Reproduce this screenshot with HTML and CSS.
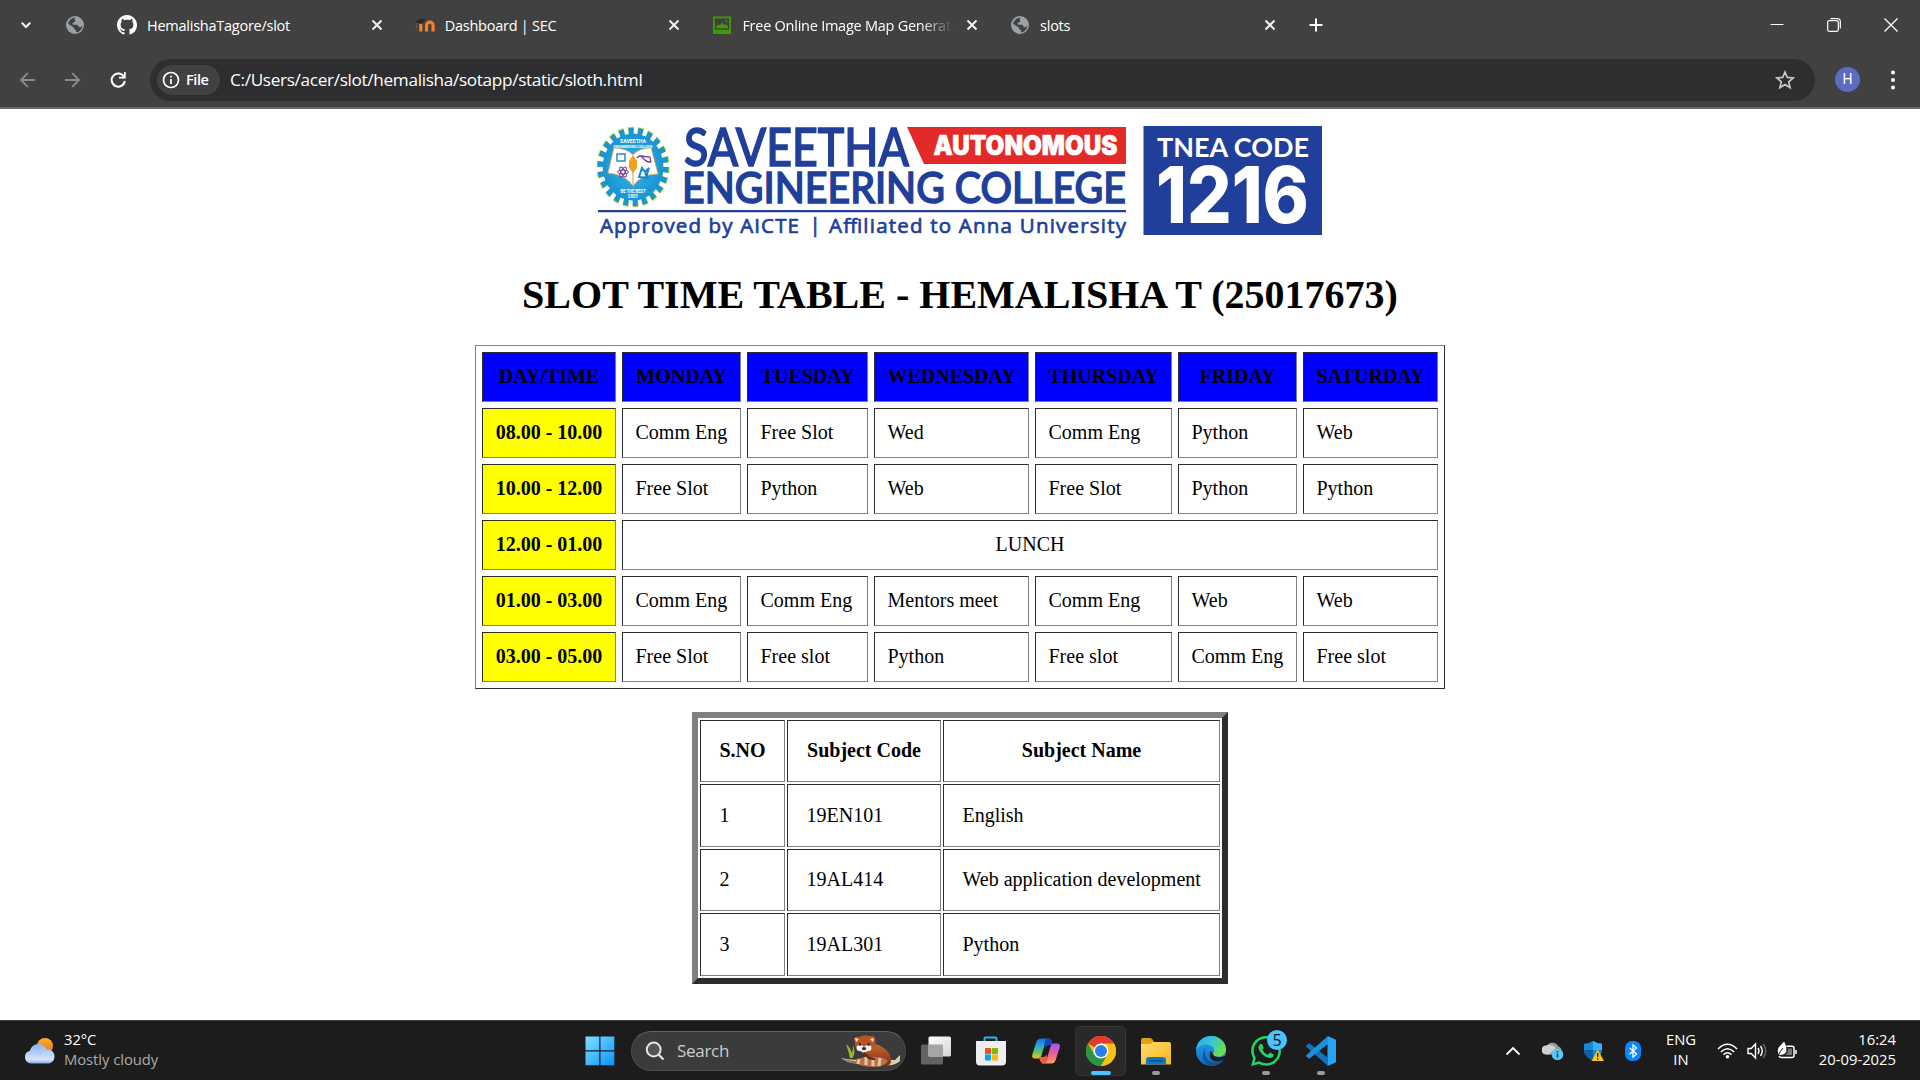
FILE: index.html
```html
<!DOCTYPE html>
<html lang="en">
<head>
<meta charset="utf-8">
<title>slots</title>
<link rel="stylesheet" href="styles.css">
</head>
<body>
<svg class="defs" width="0" height="0">
  <defs>
    <symbol id="x" viewBox="0 0 16 16"><path d="M3.500 3.500l9 9M12.500 3.500l-9 9" stroke="#f2f2f2" stroke-width="2" fill="none"/></symbol>
    <symbol id="globe" viewBox="0 0 20 20"><circle cx="10" cy="10" r="9" fill="#9aa0a6"/><path d="M10.500 2.600c-1 1.400-1.200 2-.4 3 .8.900-.3 1.700-1.600 1.900-1.400.2-1 1.800-.1 2.300h3.400c1.700.3 1.300 2.300 2.600 2.400 1.500.1 2.100-.8 3-1.800-.2 3.900-3.200 6.700-6.400 6.900v-2.500c-1.500-.2-2.200-.9-2.200-2.400L3.100 8.700c.8-3.500 3.700-6 7.400-6.100z" fill="#414141"/><path d="M11 3.600c2.500.2 4.600 2 5.200 4.300-1.500 1.400-3.400.6-3.500-.9-1.600-.2-2.300-1.900-1.700-3.400z" fill="#9aa0a6"/></symbol>
    <linearGradient id="gw" x1="0" y1="0" x2="1" y2="1"><stop offset="0" stop-color="#7fe0ff"/><stop offset="1" stop-color="#0a93ff"/></linearGradient>
    <linearGradient id="gcl" x1="0" y1="0" x2="0" y2="1"><stop offset="0" stop-color="#8fb4f2"/><stop offset=".8" stop-color="#d6e4fb"/><stop offset="1" stop-color="#7fa5e8"/></linearGradient>
    <linearGradient id="gsun" x1="0" y1="0" x2="0" y2="1"><stop offset="0" stop-color="#f7b42a"/><stop offset="1" stop-color="#ee6a14"/></linearGradient>
    <linearGradient id="gtv" x1="0" y1="0" x2="1" y2="1"><stop offset="0" stop-color="#fff"/><stop offset="1" stop-color="#d4d4d4"/></linearGradient>
    <linearGradient id="gc1" x1="0" y1="0" x2="0" y2="1"><stop offset="0" stop-color="#1a6be0"/><stop offset=".35" stop-color="#22a8e0"/><stop offset=".65" stop-color="#5cc06a"/><stop offset="1" stop-color="#f0c520"/></linearGradient>
    <linearGradient id="gc2" x1="0" y1="0" x2="0" y2="1"><stop offset="0" stop-color="#a259f0"/><stop offset=".5" stop-color="#ea5aa0"/><stop offset="1" stop-color="#ffa24a"/></linearGradient>
    <linearGradient id="gf" x1="0" y1="0" x2="1" y2="1"><stop offset="0" stop-color="#ffdb6b"/><stop offset="1" stop-color="#f5b81c"/></linearGradient>
    <linearGradient id="ge1" x1="0" y1="0" x2="1" y2=".6"><stop offset="0" stop-color="#2aa5e8"/><stop offset=".5" stop-color="#35c6d8"/><stop offset="1" stop-color="#6be04a"/></linearGradient>
    <linearGradient id="ge2" x1="0" y1="0" x2="0" y2="1"><stop offset="0" stop-color="#2aa4ea"/><stop offset="1" stop-color="#0d6cc4"/></linearGradient>
    <radialGradient id="gear"><stop offset="0" stop-color="#39b6e8"/><stop offset="1" stop-color="#1a94d2"/></radialGradient>
    <linearGradient id="gp" x1="0" y1="0" x2="0" y2="1"><stop offset="0" stop-color="#c9652f"/><stop offset="1" stop-color="#7e2f12"/></linearGradient>
  </defs>
</svg>

<header class="browser">
  <div class="tabstrip">
    <div class="tab-search"><svg width="12" height="12" viewBox="0 0 12 12"><path d="M1.800 3.800L6 8l4.200-4.200" stroke="#fff" stroke-width="2" fill="none"/></svg></div>
    <div class="pinned"><svg width="20" height="20"><use href="#globe"/></svg></div>
    <div class="tab">
      <svg width="20" height="20" viewBox="0 0 16 16"><path fill="#fff" d="M8 0C3.580 0 0 3.580 0 8c0 3.540 2.290 6.530 5.470 7.590.4.070.55-.17.55-.38 0-.19-.01-.82-.01-1.490-2.010.37-2.530-.49-2.690-.94-.09-.23-.48-.94-.82-1.130-.28-.15-.68-.52-.01-.53.63-.01 1.080.58 1.230.82.72 1.210 1.870.87 2.330.66.070-.52.28-.87.51-1.070-1.780-.2-3.640-.89-3.640-3.950 0-.87.31-1.590.82-2.150-.08-.2-.36-1.020.08-2.120 0 0 .67-.21 2.200.82.64-.18 1.320-.27 2-.27.68 0 1.360.09 2 .27 1.530-1.040 2.200-.82 2.200-.82.44 1.100.16 1.920.08 2.120.51.56.82 1.270.82 2.150 0 3.070-1.870 3.750-3.650 3.950.29.25.54.73.54 1.480 0 1.070-.01 1.930-.01 2.200 0 .21.15.46.55.38A8.013 8.013 0 0016 8c0-4.420-3.580-8-8-8z"/></svg>
      <span class="tab-title">HemalishaTagore/slot</span>
      <svg width="16" height="16"><use href="#x"/></svg>
    </div>
    <div class="tab">
      <svg width="20" height="20" viewBox="0 0 20 20"><path d="M5.800 16.500V9M11.500 16.500v-6a3.300 3.300 0 0 1 6.600 0v6" fill="none" stroke="#f08324" stroke-width="3.200"/><path d="M0 7L6 3.500l4.500.8-3 3.700L3.500 8z" fill="#2b2724"/><path d="M1.300 7.500v6" stroke="#6b5a50" stroke-width="1"/></svg>
      <span class="tab-title">Dashboard | SEC</span>
      <svg width="16" height="16"><use href="#x"/></svg>
    </div>
    <div class="tab">
      <svg width="20" height="20" viewBox="0 0 20 20"><path d="M1 1.500h18V19H1z" fill="#3f9a05"/><path d="M2.800 3.300h14.400v11.400H2.800z" fill="#414141"/><path d="M4 13.300V11.500l2.500-2 1.500.8 1.800-2.800 2.500 2.300 1.500-.5 2.200 2v2z" fill="#3f9a05"/><circle cx="14.500" cy="6" r="1" fill="#3f9a05"/></svg>
      <span class="tab-title faded">Free Online Image Map Generator</span>
      <svg width="16" height="16"><use href="#x"/></svg>
    </div>
    <div class="tab">
      <svg width="20" height="20"><use href="#globe"/></svg>
      <span class="tab-title">slots</span>
      <svg width="16" height="16"><use href="#x"/></svg>
    </div>
    <svg class="new-tab" width="24" height="24" viewBox="0 0 24 24"><path d="M12 5.500v13M5.500 12h13" stroke="#fff" stroke-width="2"/></svg>
    <div class="window-buttons">
      <svg width="14" height="14" viewBox="0 0 14 14"><path d="M.5 6.500h13" stroke="#fff"/></svg>
      <svg width="14" height="14" viewBox="0 0 14 14"><rect x=".7" y="2.700" width="10.600" height="10.600" rx="1.500" fill="none" stroke="#fff" stroke-width="1.200"/><path d="M3.500.7h7.300a2.500 2.500 0 0 1 2.500 2.500v7.300" fill="none" stroke="#fff" stroke-width="1.200"/></svg>
      <svg width="14" height="14" viewBox="0 0 14 14"><path d="M.5.5l13 13M13.500.5l-13 13" stroke="#fff" stroke-width="1.300"/></svg>
    </div>
  </div>
  <div class="toolbar">
    <div class="nav">
      <svg width="16" height="16" viewBox="0 0 16 16"><path d="M15 8H1M7.800 1.200L1 8l6.800 6.800" stroke="#8b8b8b" stroke-width="1.800" fill="none"/></svg>
      <svg width="16" height="16" viewBox="0 0 16 16"><path d="M0 8h14M7.200 1.200L14 8l-6.800 6.800" stroke="#8b8b8b" stroke-width="1.800" fill="none"/></svg>
      <svg width="18" height="18" viewBox="0 0 18 18"><path d="M14 5.800A6.600 6.600 0 1 0 14.800 10" stroke="#fff" stroke-width="2" fill="none"/><path d="M15.700 1v6.500H9V5.800h5V1z" fill="#fff"/></svg>
    </div>
    <div class="omnibox">
      <div class="chip"><svg width="18" height="18" viewBox="0 0 18 18"><circle cx="9" cy="9" r="7.500" fill="none" stroke="#fff" stroke-width="1.700"/><path d="M9 8v5M9 4.800v1.700" stroke="#fff" stroke-width="1.700"/></svg><span>File</span></div>
      <span class="url">C:/Users/acer/slot/hemalisha/sotapp/static/sloth.html</span>
      <svg class="star" width="20" height="20" viewBox="0 0 20 20"><path d="M10 2l2.300 5.400 5.900.5-4.500 3.900 1.400 5.800-5.100-3.100-5.100 3.100 1.400-5.800L1.800 7.900l5.900-.5z" fill="none" stroke="#c7c7c7" stroke-width="1.700"/></svg>
    </div>
    <div class="avatar">H</div>
    <svg width="6" height="20" viewBox="0 0 6 20"><circle cx="3" cy="2.500" r="2" fill="#fff"/><circle cx="3" cy="10" r="2" fill="#fff"/><circle cx="3" cy="17.500" r="2" fill="#fff"/></svg>
  </div>
</header>

<main class="page">
  <svg class="logo" width="726" height="114" viewBox="597 125 726 114">
    <g transform="translate(0 167) scale(.98 1.080) translate(13 -167)">
      <circle cx="633" cy="167" r="33.500" fill="none" stroke="#b4d233" stroke-width="7.500" stroke-dasharray="5.400 4.168" stroke-dashoffset=".4"/>
      <circle cx="633" cy="167" r="33" fill="none" stroke="#1a94d2" stroke-width="6.500" stroke-dasharray="5 4.425"/>
      <circle cx="633" cy="167" r="31" fill="url(#gear)"/>
    </g>
    <g class="seal-text"><text x="633" y="142.500" font-size="6" textLength="26" lengthAdjust="spacingAndGlyphs">SAVEETHA</text><text x="633" y="147.500" font-size="3.800" textLength="39" lengthAdjust="spacingAndGlyphs">ENGINEERING COLLEGE</text><text x="633" y="192.500" font-size="4.800" textLength="25" lengthAdjust="spacingAndGlyphs">BE THE BEST</text><text x="633" y="197.500" font-size="4.500">2001</text></g>
    <path d="M608 173l6-25q12 0 19 7 6-7 18-7l7 26q-17 0-25 12-8-12-25-13z" fill="#fff" stroke="#e9b44c" stroke-width=".8"/>
    <path d="M633 156v29" stroke="#c99b55" stroke-width="1"/>
    <path d="M633 155l4 6v7l-4 5-4-5v-7z" fill="#f4a21c"/>
    <rect x="617" y="154" width="8" height="7" fill="none" stroke="#2b8cc4" stroke-width="1.500"/>
    <g fill="none" stroke="#7b3a9a"><ellipse cx="623" cy="172" rx="5.500" ry="2"/><ellipse cx="623" cy="172" rx="5.500" ry="2" transform="rotate(60 623 172)"/><ellipse cx="623" cy="172" rx="5.500" ry="2" transform="rotate(120 623 172)"/><path d="M637 158q3-4 6 0t7 4M641 156l9 1 1 6" stroke-width="1.300"/></g>
    <path d="M639 177l3-9 3 4 4-4-2 6 1 4zM645 173l2 4" fill="none" stroke="#168bd0" stroke-width="2"/>
    <g class="logo-blue">
      <text x="684" y="165.500" font-size="52.500" textLength="225" lengthAdjust="spacingAndGlyphs">SAVEETHA</text>
      <text x="682" y="203" font-size="43" textLength="444" lengthAdjust="spacingAndGlyphs">ENGINEERING COLLEGE</text>
      <g class="tagline" font-size="20.500"><text x="600" y="232.500" textLength="199" lengthAdjust="spacing">Approved by AICTE</text><text x="809.500" y="231.500">|</text><text x="829" y="232.500" textLength="297" lengthAdjust="spacing">Affiliated to Anna University</text></g>
      <path d="M598 210h528v2.300H598zM1143.500 126H1322v109h-178.500z"/>
    </g>
    <path d="M907 127h219v37H924z" fill="#e42a29"/>
    <g fill="#fff">
      <text class="auto" x="933.500" y="155" font-size="26.500" textLength="184" lengthAdjust="spacingAndGlyphs">AUTONOMOUS</text>
      <text class="tnea" x="1157" y="156.500" font-size="26.500" textLength="152" lengthAdjust="spacingAndGlyphs">TNEA CODE</text>
      <text class="code" x="1156" y="223" font-size="78" textLength="153" lengthAdjust="spacingAndGlyphs">1216</text>
    </g>
  </svg>

  <h1>SLOT TIME TABLE - HEMALISHA T (25017673)</h1>

  <table class="timetable">
    <colgroup><col class="c1"><col class="c2"><col class="c3"><col class="c4"><col class="c5"><col class="c6"><col class="c7"></colgroup>
    <tr class="days"><th>DAY/TIME</th><th>MONDAY</th><th>TUESDAY</th><th>WEDNESDAY</th><th>THURSDAY</th><th>FRIDAY</th><th>SATURDAY</th></tr>
    <tr><th>08.00 - 10.00</th><td>Comm Eng</td><td>Free Slot</td><td>Wed</td><td>Comm Eng</td><td>Python</td><td>Web</td></tr>
    <tr><th>10.00 - 12.00</th><td>Free Slot</td><td>Python</td><td>Web</td><td>Free Slot</td><td>Python</td><td>Python</td></tr>
    <tr><th>12.00 - 01.00</th><td class="lunch" colspan="6">LUNCH</td></tr>
    <tr><th>01.00 - 03.00</th><td>Comm Eng</td><td>Comm Eng</td><td>Mentors meet</td><td>Comm Eng</td><td>Web</td><td>Web</td></tr>
    <tr><th>03.00 - 05.00</th><td>Free Slot</td><td>Free slot</td><td>Python</td><td>Free slot</td><td>Comm Eng</td><td>Free slot</td></tr>
  </table>

  <table class="subjects">
    <colgroup><col class="s1"><col class="s2"><col class="s3"></colgroup>
    <tr class="head"><th>S.NO</th><th>Subject Code</th><th>Subject Name</th></tr>
    <tr class="tall"><td>1</td><td>19EN101</td><td>English</td></tr>
    <tr class="mid"><td>2</td><td>19AL414</td><td>Web application development</td></tr>
    <tr class="tall"><td>3</td><td>19AL301</td><td>Python</td></tr>
  </table>
</main>

<footer class="taskbar">
  <div class="weather">
    <svg width="31" height="26" viewBox="0 0 31 26"><circle cx="21" cy="8" r="8" fill="url(#gsun)"/><path d="M7 25.500a6.500 6.500 0 0 1-1-12.800C7 8.500 10.500 6 14.500 6c4 0 6.500 2 7.800 5.200 4.500-.5 8.200 2.500 8.200 7 0 4.300-3 7.300-6.500 7.300z" fill="url(#gcl)"/><path d="M6 13q5-1.500 9 3.500M16 17q1-5 6.500-6" stroke="#a9c5f5" fill="none"/></svg>
    <div class="weather-text"><span>32°C</span><span class="dim">Mostly cloudy</span></div>
  </div>
  <div class="slot"><svg width="30" height="30" viewBox="0 0 30 30"><path d="M.5.500h13.800v13.800H.5zM15.500.500h13.800v13.800H15.500zM.5 15.500h13.800v13.800H.5zM15.500 15.500h13.800v13.800H15.500z" fill="url(#gw)"/></svg></div>
  <div class="search">
    <svg width="20" height="20" viewBox="0 0 20 20"><circle cx="8.700" cy="8.500" r="6.900" fill="#555" stroke="#e4e4e4" stroke-width="2"/><path d="M13.500 13.500l5 5" stroke="#e4e4e4" stroke-width="2.200"/></svg>
    <span>Search</span>
    <svg class="panda" width="62" height="34" viewBox="0 0 62 34">
      <path d="M1 24q12 3 22 1l32 1 5-5v6q-5 5-14 4L16 29Q8 30 1 24z" fill="#d9ceb0"/><path d="M1 24q12 5 24 2l-3 4Q8 30 1 24z" fill="#8b7a5c"/>
      <path d="M10 24q-1-5-4-14 5 4 5.500 9 2-3 1.500-8 3 7-.5 13z" fill="#9cb52a"/>
      <path d="M26 14q8-7 16-1 9 5 9 14 0 6-10 4-14 0-16-8z" fill="url(#gp)"/>
      <path d="M16 26q8-4 20-3 8 0 12 4-4 6-14 6-12 0-18-4z" fill="#b9714c"/>
      <path d="M19 25l-1 5M26 23v8M33 23v9M40 24l-1 8" stroke="#e9c3a0" stroke-width="3"/>
      <path d="M14 5q0-3 5-2 6-3 11-1 5-1 5 3 2 6-2 11-5 5-12 2-7-4-6-9z" fill="#b85424"/>
      <path d="M15 4l4 1-3 3zM34 4l-4 1 3 3z" fill="#f3e6d8"/>
      <ellipse cx="20" cy="14" rx="3.500" ry="3" fill="#fff"/><ellipse cx="28" cy="14" rx="3.500" ry="3" fill="#fff"/><ellipse cx="24" cy="15.500" rx="3.500" ry="3" fill="#e7e7ea"/>
      <circle cx="20" cy="10.500" r="1.300" fill="#20222e"/><circle cx="28.500" cy="10.500" r="1.300" fill="#20222e"/><ellipse cx="24" cy="14.500" rx="2" ry="1.500" fill="#20222e"/>
      <path d="M24 19l5 5 6 1" stroke="#6a2c14" stroke-width="2.500" fill="none"/>
    </svg>
  </div>
  <div class="apps">
    <div class="slot"><svg width="30" height="30" viewBox="0 0 30 30"><rect x="0" y="8.500" width="22" height="20" rx="1.500" fill="#626262"/><rect x="7.500" y=".5" width="22.500" height="20" rx="1.500" fill="url(#gtv)"/><path d="M7.500 8.500H22v12H7.500z" fill="#a5a5a5"/></svg></div>
    <div class="slot"><svg width="30" height="30" viewBox="0 0 30 30"><path d="M8.500 6V2.500q0-1 1-1h10q1 0 1 1V6" fill="none" stroke="#29b4f2" stroke-width="2"/><path d="M0 5h30v20.500q0 4-4 4H4q-4 0-4-4z" fill="#eee"/><path d="M9 12h6v6H9z" fill="#f25022"/><path d="M16 12h6v6h-6z" fill="#7fba00"/><path d="M9 18.500h6v6H9z" fill="#00a4ef"/><path d="M16 18.500h6v6h-6z" fill="#ffb900"/></svg></div>
    <div class="slot"><svg width="30" height="28" viewBox="0 0 30 28"><path d="M19 1.500h-9.500Q6.500 1.500 5.300 5L1.500 17q-1.500 4.500 2.500 4.500h3.500q2 0 2.800-2.500L14 6.500q1.200-4 4-4z" fill="url(#gc1)"/><path d="M17 1.500q3 0 4 3L22.500 8H18q-2.500 0-3.300 2.500L13.500 6q.5-4.500 3.500-4.500z" fill="#1748b8"/><path d="M11 26.500h9.500q3 0 4.200-3.500l3.800-12q1.500-4.500-2.500-4.500h-3.500q-2 0-2.800 2.500L16 21.500q-1.200 4-4 4z" fill="url(#gc2)"/><path d="M13 26.500q-3 0-4-3L7.500 20H12q2.500 0 3.300-2.500L16.500 22q-.5 4.500-3.500 4.500z" fill="#ef5a4f"/></svg></div>
    <div class="slot active"><svg width="30" height="30" viewBox="0 0 48 48"><circle cx="24" cy="24" r="24" fill="#fbc116"/><path d="M24 24L3.200 12A24 24 0 0 1 44.800 12z" fill="#e33b2e"/><path d="M3.200 12A24 24 0 0 0 24 48l10.400-18L24 24 13.600 30z" fill="#2b9546"/><path d="M24 12h20.800A24 24 0 0 1 24 48l10.400-18z" fill="#fbc116"/><circle cx="24" cy="24" r="12" fill="#fff"/><circle cx="24" cy="24" r="9.600" fill="#2b7df0"/></svg><i class="bar wide"></i></div>
    <div class="slot"><svg width="30" height="30" viewBox="0 0 30 30"><path d="M0 4q0-2 2-2h7q1.500 0 2.500 1.500L13 6v5H0z" fill="#e0a10c"/><path d="M0 8h9q1.500 0 3-2h16q2 0 2 2v20.500H0z" fill="url(#gf)"/><path d="M5 28.500V24q0-3 3-3h14q3 0 3 3v4.500z" fill="#1377c9"/><path d="M8 24.700h14" stroke="#0b4f8f" stroke-width="1.500"/></svg><i class="bar"></i></div>
    <div class="slot"><svg width="30" height="30" viewBox="0 0 30 30"><circle cx="15" cy="15" r="15" fill="url(#ge2)"/><path d="M0 14C1 5 7.500 0 15 0c9 0 15 6.500 15 13 0 5-3.500 7.500-7.500 7.500-4 0-5.500-1.700-5.500-2.500 0-.8 1.200-1.500 1.200-3.500C18.200 11 14.500 8.500 10 8.500 5 8.500 1.500 11 0 14z" fill="url(#ge1)"/><path d="M12 10c-4 3-4.500 9 0 13.500 4.500 4 11 3 16-.3-2.500 4.500-7.500 6.800-13 6.800-5-.5-8.500-6-8-11 .3-4 2.500-7.500 5-9z" fill="#0c549c"/><path d="M17 18c.5 3.500 7 4.500 12.700 1.500l-1.700 3.700c-4 2.500-9 3-12 .8-3-3-3-7-1-9z" fill="#1c1c1c"/></svg></div>
    <div class="slot"><svg width="30" height="30" viewBox="0 0 24 24"><path fill="#25d366" d="M17.472 14.382c-.297-.149-1.758-.867-2.030-.967-.273-.099-.471-.148-.67.15-.197.297-.767.966-.94 1.164-.173.199-.347.223-.644.075-.297-.15-1.255-.463-2.390-1.475-.883-.788-1.480-1.761-1.653-2.059-.173-.297-.018-.458.13-.606.134-.133.298-.347.446-.52.149-.174.198-.298.298-.497.099-.198.050-.371-.025-.52-.075-.149-.669-1.612-.916-2.207-.242-.579-.487-.5-.669-.51-.173-.008-.371-.01-.57-.01-.198 0-.52.074-.792.372-.272.297-1.040 1.016-1.040 2.479 0 1.462 1.065 2.875 1.213 3.074.149.198 2.096 3.200 5.077 4.487.709.306 1.262.489 1.694.625.712.227 1.360.195 1.871.118.571-.085 1.758-.719 2.006-1.413.248-.694.248-1.289.173-1.413-.074-.124-.272-.198-.57-.347m-5.421 7.403h-.004a9.870 9.870 0 01-5.031-1.378l-.361-.214-3.741.982.998-3.648-.235-.374a9.860 9.860 0 01-1.510-5.260c.001-5.450 4.436-9.884 9.888-9.884 2.640 0 5.122 1.030 6.988 2.898a9.825 9.825 0 012.893 6.994c-.003 5.450-4.437 9.884-9.885 9.884m8.413-18.297A11.815 11.815 0 0012.050 0C5.495 0 .16 5.335.157 11.892c0 2.096.547 4.142 1.588 5.945L.057 24l6.305-1.654a11.882 11.882 0 005.683 1.448h.005c6.554 0 11.890-5.335 11.893-11.893a11.821 11.821 0 00-3.480-8.413z"/></svg><b class="badge">5</b><i class="bar"></i></div>
    <div class="slot"><svg width="30" height="30" viewBox="0 0 30 30"><path d="M21.500 0L29 3.200q1 .5 1 1.500v20.600q0 1-1 1.500L21.500 30z" fill="#27a5f3"/><path d="M.5 9.500l2-1.700q.7-.5 1.400 0L22 22v8L.5 11q-.7-.8 0-1.500z" fill="#0e73c0"/><path d="M.5 20.500l2 1.700q.7.500 1.400 0L22 8V0L.5 19q-.7.800 0 1.500z" fill="#1c8fdd"/></svg><i class="bar"></i></div>
  </div>
  <div class="tray">
    <svg width="16" height="10" viewBox="0 0 16 10"><path d="M1.500 8.500L8 2l6.500 6.500" fill="none" stroke="#fff" stroke-width="1.800"/></svg>
    <svg class="cloud" width="22" height="20" viewBox="0 0 22 20"><path d="M4.500 13.500a4.500 4.500 0 0 1 0-8A6.500 6.500 0 0 1 16 5q4 1.500 3.500 6l-3 3z" fill="#9a9a9a"/><path d="M4 4.500Q9 2 14 7l-7 6.500H4a4.500 4.500 0 0 1 0-9z" fill="#d0d0d0"/><circle cx="15.500" cy="13.500" r="5.800" fill="#5ac8fa"/><path d="M15.500 12.500v4M15.500 10v1.600" stroke="#12415a" stroke-width="1.600"/></svg>
    <svg class="shield" width="20" height="20" viewBox="0 0 20 20"><path d="M9 0q4 2.700 9 2.700V9q0 7-9 10.500Q0 16 0 9V2.700Q5 2.700 9 0z" fill="#1a86d9"/><path d="M9 0q4 2.700 9 2.700V9H9z" fill="#34b1f0"/><path d="M9 9v10.500Q0 16 0 9z" fill="#0b5ea8"/><path d="M13.700 8.500L20 20H7.500z" fill="#fbc51d"/><path d="M13.700 12v4M13.700 17.200v1.500" stroke="#222" stroke-width="1.300"/></svg>
    <svg class="bt" width="16" height="20" viewBox="0 0 16 20"><rect width="16" height="20" rx="7" fill="#0a84ff"/><path d="M4.500 6.700l7 6.300L8 16V4l3.500 3-7 6.300" fill="none" stroke="#fff" stroke-width="1.300"/></svg>
    <div class="lang"><span>ENG</span><span>IN</span></div>
    <svg class="wifi" width="21" height="16" viewBox="0 0 21 16"><g fill="none" stroke="#fff" stroke-width="1.500"><path d="M1 6q9.500-9.500 19 0M3.800 9q6.700-6.500 13.400 0M6.500 11.700q4-3.800 8 0"/></g><circle cx="10.500" cy="13.800" r="1.800" fill="#fff"/></svg>
    <svg class="vol" width="21" height="18" viewBox="0 0 21 18"><path d="M1 6.500h3.200L8.500 2v14l-4.300-4.500H1z" fill="none" stroke="#fff" stroke-width="1.400"/><path d="M11 6q2 3 0 6M13.500 4q3.500 5 0 10" fill="none" stroke="#fff" stroke-width="1.400"/><path d="M16.200 2q5 7 0 14" fill="none" stroke="#666" stroke-width="1.400"/></svg>
    <svg class="bat" width="21" height="18" viewBox="0 0 21 18"><path d="M9.500 4.200H15q2 0 2 2v7.300q0 2-2 2H4.500q-2 0-2.500-1.500M19 8v4" fill="none" stroke="#fff" stroke-width="1.500"/><path d="M1.500 12.500Q0 8 2 5q2-2 5-5.500Q9.500 3 9.500 8q0 4.500-6 5z" fill="#fff"/><path d="M11 6.500h4v6.500H8.500Q11 11 11 6.500z" fill="#777"/><path d="M.5 15q2-5.500 5.500-9" stroke="#1c1c1c" fill="none"/></svg>
    <div class="clock"><span>16:24</span><span>20-09-2025</span></div>
  </div>
</footer>
</body>
</html>
```
FILE: styles.css
```css
* { box-sizing: border-box; }
body {
  margin: 0;
  width: 1920px;
  height: 1080px;
  overflow: hidden;
  display: flex;
  flex-direction: column;
  background: #fff;
  color: #000;
  font-family: "Liberation Serif", serif;
}
svg { display: block; flex: none; }
.defs { position: absolute; }

/* Browser frame */
.browser {
  height: 109px;
  flex: none;
  background: #414141;
  border-bottom: 2px solid #6b6868;
  color: #fff;
  font-family: "Open Sans", "Noto Sans", sans-serif;
}
.tabstrip { display: flex; align-items: center; height: 50px; }
.tab-search { width: 52px; display: flex; justify-content: center; }
.pinned { width: 55px; padding-left: 13px; }
.tab { width: 297.700px; display: flex; align-items: center; padding: 0 20px 0 10px; }
.tab-title {
  flex: 1;
  min-width: 0;
  margin: 2px 11px 0 10px;
  font-size: 14.500px;
  letter-spacing: -0.250px;
  line-height: 20px;
  white-space: nowrap;
  overflow: hidden;
}
.faded {
  -webkit-mask-image: linear-gradient(90deg, #000 85%, transparent 100%);
  mask-image: linear-gradient(90deg, #000 85%, transparent 100%);
}
.new-tab { margin-left: 6px; }
.window-buttons { display: flex; gap: 43px; margin-left: auto; padding-right: 22px; }
.toolbar { display: flex; align-items: center; height: 59px; }
.nav { display: flex; align-items: center; width: 150px; padding-left: 20px; gap: 29px; }
.omnibox {
  display: flex;
  align-items: center;
  width: 1665px;
  height: 42px;
  padding: 0 20px 0 7px;
  border-radius: 21px;
  background: #2e2e30;
}
.chip {
  display: flex;
  align-items: center;
  gap: 6px;
  width: 63px;
  height: 30px;
  padding-left: 5px;
  border-radius: 15px;
  background: #414141;
  font-size: 14.500px;
  font-weight: 600;
  letter-spacing: -0.400px;
}
.chip span { margin-top: -1px; }
.url { margin-left: 10px; font-size: 17.200px; letter-spacing: -0.330px; }
.star { margin-left: auto; }
.avatar {
  width: 25px;
  height: 25px;
  margin: 0 30px 0 20px;
  border-radius: 50%;
  background: #5c6bc0;
  font: 14px/25px Roboto, sans-serif;
  text-align: center;
}

/* Page */
.page { flex: 1; display: flex; flex-direction: column; align-items: center; padding-top: 16px; }
.logo-blue { fill: #203f9a; font-family: Lato, sans-serif; font-weight: 500; }
.logo-blue text { stroke: #203f9a; stroke-width: 1.500px; }
.logo-blue .tagline text { font-family: "Open Sans", sans-serif; font-weight: 500; stroke-width: 0.700px; }
.seal-text { fill: #fff; font-family: Roboto, sans-serif; font-weight: 700; text-anchor: middle; }
.auto { font-family: Inter, "Liberation Sans", sans-serif; font-weight: 900; stroke: #fff; stroke-width: 0.600px; }
.tnea { font-family: Lato, sans-serif; font-weight: 700; }
.code { font-family: Inter, "Liberation Sans", sans-serif; font-weight: 800; }
h1 { margin: 33px 0 27px; font-size: 40px; line-height: 46px; font-weight: 700; }
table { border: 1px solid; border-color: #808080 #2c2c2c #2c2c2c #808080; border-collapse: separate; table-layout: fixed; font-size: 20px; line-height: 23px; }
th, td { border: 1px solid; border-color: #2c2c2c #808080 #808080 #2c2c2c; white-space: nowrap; }
td { text-align: left; }
.timetable { width: 970px; border-spacing: 6px; }
.timetable tr { height: 50px; }
.timetable th, .timetable td { padding: 0 12px 1px; }
.timetable td { padding-left: 12.500px; padding-right: 0; }
.timetable th { background: #ff0; }
.timetable .days th { background: #00f; padding: 0 0 1px; }
.timetable .lunch { padding-left: 0; text-align: center; }
.c1 { width: 134px; }
.c2 { width: 119px; }
.c3 { width: 121px; }
.c4 { width: 155px; }
.c5 { width: 137px; }
.c6 { width: 119px; }
.c7 { width: 135px; }
.subjects { width: 536px; margin-top: 23px; border-width: 6px; border-spacing: 2px; }
.subjects tr { height: 62px; }
.subjects .tall { height: 63px; }
.subjects th { padding: 0 0 1px; }
.subjects td { padding: 0 0 0 18.500px; }
.subjects .mid td { padding-bottom: 1px; }
.s1 { width: 85px; }
.s2 { width: 154px; }
.s3 { width: 277px; }

/* Taskbar */
.taskbar {
  display: flex;
  align-items: center;
  flex: none;
  height: 60px;
  border-top: 1px solid #414343;
  background: #1c1c1c;
  color: #fff;
  font-family: "Open Sans", "Noto Sans", sans-serif;
  font-size: 14.800px;
  line-height: 20px;
}
.weather { display: flex; align-items: center; gap: 9px; width: 572px; padding-left: 24px; }
.weather-text, .lang, .clock { display: flex; flex-direction: column; margin-top: -4px; }
.weather-text { letter-spacing: -0.050px; }
.dim { color: #ababab; }
.slot { position: relative; display: flex; align-items: center; justify-content: center; width: 55px; height: 50px; }
.search {
  display: flex;
  align-items: center;
  width: 275px;
  height: 40px;
  margin: 0 2px 0 4px;
  padding: 0 3px 0 13px;
  border: 1px solid #4b4b4b;
  border-top-color: #626262;
  border-radius: 20px;
  background: #3b3b3b;
  color: #ccc;
  font-size: 17px;
}
.search span { margin-left: 12px; letter-spacing: -0.300px; }
.panda { margin-left: auto; }
.apps { display: flex; }
.active::before {
  content: "";
  position: absolute;
  inset: 0 2px;
  border: 1px solid #353535;
  border-radius: 5px;
  background: #292929;
}
.active svg { position: relative; }
.bar { position: absolute; bottom: 1px; left: 50%; width: 8px; height: 4px; margin-left: -4px; border-radius: 2px; background: #9a9a9a; }
.bar.wide { width: 20px; margin-left: -10px; background: #4cc2ff; }
.badge {
  position: absolute;
  top: 4px;
  right: 6px;
  width: 20px;
  height: 20px;
  border-radius: 50%;
  background: #4cc2ff;
  color: #111;
  font-size: 16px;
  font-weight: 400;
  line-height: 20px;
  text-align: center;
}
.tray { display: flex; align-items: center; margin-left: auto; padding-right: 24px; }
.cloud { margin-left: 21px; }
.shield { margin-left: 20px; }
.bt { margin-left: 21px; }
.lang { width: 40px; margin-left: 20px; align-items: center; }
.wifi { margin-left: 16px; }
.vol { margin-left: 9px; }
.bat { margin-left: 9px; }
.clock { width: 98px; align-items: flex-end; }
```
